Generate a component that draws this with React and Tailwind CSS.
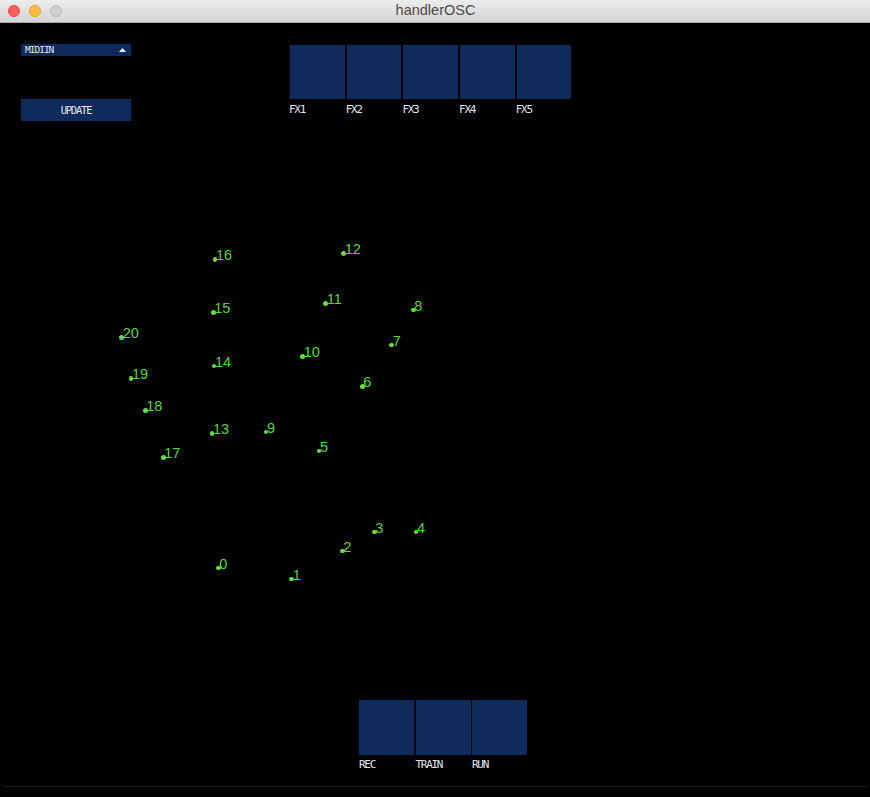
import React from 'react';

const points = [
  [0, 218.3, 568],
  [1, 291.7, 579],
  [2, 342.3, 551],
  [3, 374.3, 532],
  [4, 416, 532],
  [5, 319, 451],
  [6, 362.3, 386.7],
  [7, 391.7, 345],
  [8, 413.3, 310],
  [9, 266, 432],
  [10, 302.7, 356.3],
  [11, 325.7, 303.7],
  [12, 343.7, 253.7],
  [13, 212, 433.7],
  [14, 214, 366],
  [15, 213.3, 312.3],
  [16, 215, 259.3],
  [17, 163.3, 457.3],
  [18, 145.3, 410.7],
  [19, 131, 378.7],
  [20, 121.7, 337.7],
];

const CANVAS_TOP = 23;

const Pad = ({ label }) => (
  <div className="flex flex-col w-[54.7px]">
    <div className="h-[54px] w-[54.7px] bg-[#0f2b5b]" />
    <span className="mt-[5px] -ml-[1px] text-[11px] leading-none text-[#e4e4e4] tracking-[-1.3px] font-['DejaVu_Sans_Mono',monospace]">
      {label}
    </span>
  </div>
);

const App = () => {
  return (
    <div className="w-[870px] h-[797px] bg-black overflow-hidden">
      {/* Title bar */}
      <div className="relative h-[23px] bg-gradient-to-b from-[#ececec] to-[#d4d4d4] border-b border-[#a9a9a9] flex items-center">
        <div className="flex items-center gap-[9px] pl-[8px]">
          <span className="w-[12px] h-[12px] rounded-full bg-[#fc605c] border border-[#de4b46]" />
          <span className="w-[12px] h-[12px] rounded-full bg-[#fdbc40] border border-[#dea236]" />
          <span className="w-[12px] h-[12px] rounded-full bg-[#d0d0d0] border border-[#bdbdbd]" />
        </div>
        <span className="absolute left-0 right-0 pl-[1px] text-center text-[14.5px] text-[#4b4b4b] font-['Liberation_Sans',sans-serif]">
          handlerOSC
        </span>
      </div>

      {/* Canvas */}
      <div className="relative h-[764px] bg-black rounded-b-[5px] border-b border-[#1c1c1c]">
        <div className="flex pt-[21px]">
          {/* left controls */}
          <div className="ml-[21px] w-[110px] flex flex-col">
            <div className="h-[12px] bg-[#0f2b5b] flex items-center justify-between pl-[4px] pr-[5px]">
              <span className="text-[9.5px] leading-none text-[#e8e8e8] tracking-[-1px] font-['DejaVu_Sans_Mono',monospace]">
                MIDIIN
              </span>
              <svg width="7" height="4" viewBox="0 0 7 4">
                <path d="M0 4 L3.5 0 L7 4 Z" fill="#f0f0f0" />
              </svg>
            </div>
            <button className="mt-[43px] h-[22px] bg-[#0f2b5b] flex items-center justify-center text-[10.5px] leading-none text-[#e8e8e8] tracking-[-1.2px] font-['DejaVu_Sans_Mono',monospace]">
              UPDATE
            </button>
          </div>

          {/* FX pads */}
          <div className="ml-[159px] mt-[1px] flex gap-[2px]">
            {['FX1', 'FX2', 'FX3', 'FX4', 'FX5'].map((l) => (
              <Pad key={l} label={l} />
            ))}
          </div>
        </div>

        {/* transport pads */}
        <div className="mt-[579px] ml-[359px] flex gap-[1.5px]">
          {['REC', 'TRAIN', 'RUN'].map((l) => (
            <div key={l} className="flex flex-col w-[55px]">
              <div className="h-[55px] w-[55px] bg-[#0f2b5b]" />
              <span className="mt-[4px] text-[11px] leading-none text-[#e4e4e4] tracking-[-1.3px] font-['DejaVu_Sans_Mono',monospace]">
                {l}
              </span>
            </div>
          ))}
        </div>

        {/* point cloud */}
        {points.map(([n, x, y]) => (
          <div key={n}>
            <span
              className="absolute w-[4.5px] h-[4.5px] rounded-full bg-[#5fe23c]"
              style={{ left: x - 2.25, top: y - CANVAS_TOP - 2.25 }}
            />
            <span
              className="absolute text-[14.5px] leading-none text-[#58d63b] font-['Liberation_Sans',sans-serif]"
              style={{ left: x + 1, top: y - CANVAS_TOP - 11.5 }}
            >
              {n}
            </span>
          </div>
        ))}
      </div>
    </div>
  );
};

export default App;
